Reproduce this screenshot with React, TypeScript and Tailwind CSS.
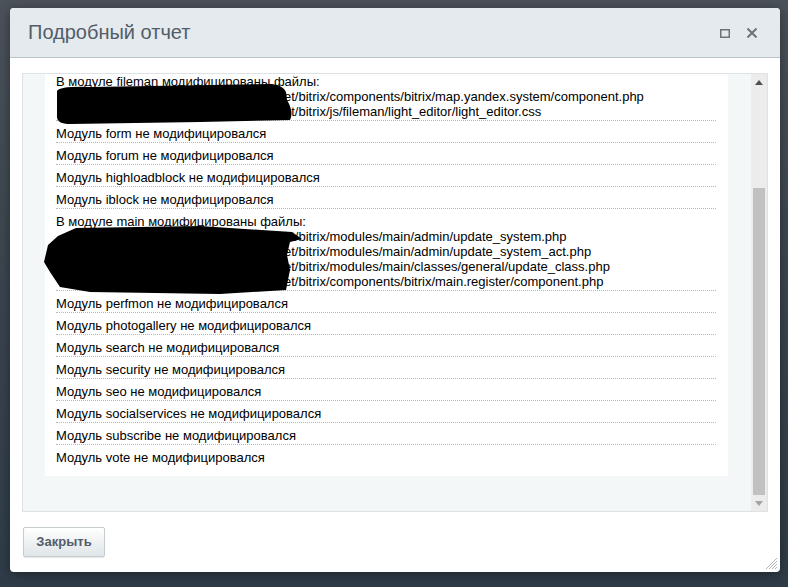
import React from "react";

const font = { fontFamily: '"Liberation Sans", Arial, sans-serif' };

type Row = { title: string; files?: string[] };

const rows: Row[] = [
  {
    title: "В модуле fileman модифицированы файлы:",
    files: [
      "et/bitrix/components/bitrix/map.yandex.system/component.php",
      "et/bitrix/js/fileman/light_editor/light_editor.css",
    ],
  },
  { title: "Модуль form не модифицировался" },
  { title: "Модуль forum не модифицировался" },
  { title: "Модуль highloadblock не модифицировался" },
  { title: "Модуль iblock не модифицировался" },
  {
    title: "В модуле main модифицированы файлы:",
    files: [
      "et/bitrix/modules/main/admin/update_system.php",
      "et/bitrix/modules/main/admin/update_system_act.php",
      "et/bitrix/modules/main/classes/general/update_class.php",
      "et/bitrix/components/bitrix/main.register/component.php",
    ],
  },
  { title: "Модуль perfmon не модифицировался" },
  { title: "Модуль photogallery не модифицировался" },
  { title: "Модуль search не модифицировался" },
  { title: "Модуль security не модифицировался" },
  { title: "Модуль seo не модифицировался" },
  { title: "Модуль socialservices не модифицировался" },
  { title: "Модуль subscribe не модифицировался" },
  { title: "Модуль vote не модифицировался" },
];

const ReportRow = ({ row, last }: { row: Row; last: boolean }) => (
  <div
    className={`pt-[5px] pb-[1px] text-[13px] leading-[15px] text-black ${
      last ? "" : "border-b border-dotted border-[#b8b8b8]"
    }`}
  >
    <div>{row.title}</div>
    {row.files?.map((f) => (
      <div key={f} className="whitespace-nowrap">
        <span className="inline-block w-[228px]" />
        {f}
      </div>
    ))}
  </div>
);

const Scrollbar = () => (
  <div className="flex w-[16px] flex-col bg-[#ececec]">
    <div className="flex h-[16px] items-center justify-center">
      <svg width="8" height="5" viewBox="0 0 8 5">
        <path d="M0 5 L4 0 L8 5 Z" fill="#505050" />
      </svg>
    </div>
    <div className="h-[98px]" />
    <div className="mx-[2px] h-[307px] bg-[#c1c1c1]" />
    <div className="flex h-[16px] items-center justify-center">
      <svg width="8" height="5" viewBox="0 0 8 5">
        <path d="M0 0 L4 5 L8 0 Z" fill="#a3a3a3" />
      </svg>
    </div>
  </div>
);

export default function App() {
  return (
    <div
      className="relative h-[587px] w-[788px] overflow-hidden bg-gradient-to-b from-[#4b5259] via-[#3a454f] to-[#2f3c47] pt-[8px] pl-[10px]"
      style={font}
    >
      <div className="relative flex h-[564px] w-[770px] flex-col overflow-hidden rounded-[4px] bg-white shadow-[0_2px_12px_rgba(0,0,0,0.4)]">
        <div className="flex h-[50px] items-center border-b border-[#bcc3c7] bg-[#e4eaed] pl-[18px] pr-[23px]">
          <div className="flex-1 pb-[1px] text-[20px] text-[#535c69]">
            Подробный отчет
          </div>
          <div className="flex items-center gap-[17px] pt-[1px]">
            <svg width="10" height="9" viewBox="0 0 10 9">
              <rect x="0.75" y="0.75" width="8.5" height="7.5" fill="none" stroke="#6b737c" strokeWidth="1.5" />
            </svg>
            <svg width="10" height="10" viewBox="0 0 10 10">
              <path d="M0.5 0.5 L9.5 9.5 M9.5 0.5 L0.5 9.5" stroke="#6b737c" strokeWidth="2" />
            </svg>
          </div>
        </div>

        <div className="flex flex-col px-[12px] pt-[15px]">
          <div className="flex h-[439px] border border-[#dce2e5] bg-[#f4f7f8]">
            <div className="w-[22px]" />
            <div className="flex h-[402px] w-[683px] flex-col overflow-hidden bg-white">
              <div className="mt-[-5px] pl-[11px] pr-[12px]">
                {rows.map((r, i) => (
                  <ReportRow key={r.title} row={r} last={i === rows.length - 1} />
                ))}
              </div>
            </div>
            <div className="w-[23px]" />
            <Scrollbar />
          </div>

          <div className="mt-[15px] pl-[1px]">
            <button className="h-[30px] w-[82px] rounded-[2px] border border-[#c6cdd1] bg-gradient-to-b from-white to-[#dfe5e8] text-[13px] font-bold text-[#535c69] shadow-[0_1px_1px_rgba(0,0,0,0.1)]">
              Закрыть
            </button>
          </div>
        </div>

        <svg className="absolute right-[3px] bottom-[3px]" width="12" height="12" viewBox="0 0 12 12">
          <path d="M12 1 L1 12 M12 4 L4 12 M12 7 L7 12 M12 10 L10 12" stroke="#9aa1a6" strokeWidth="0.8" />
        </svg>
      </div>

      <svg className="pointer-events-none absolute top-0 left-0" width="788" height="587" viewBox="0 0 788 587">
        <path
          d="M57 91 Q60 86 90 87 L272 84 Q284 86 286 92 L287 100 Q294 112 290 120 L200 122 L70 124 Q56 124 57 115 Z"
          fill="#000"
        />
        <path
          d="M76 228 L200 226 L292 232 L302 239 L290 242 L287 255 L290 270 L286 290 L220 294 L90 292 L60 287 L50 272 L44 262 L48 245 L58 236 Z"
          fill="#000"
        />
      </svg>
    </div>
  );
}
